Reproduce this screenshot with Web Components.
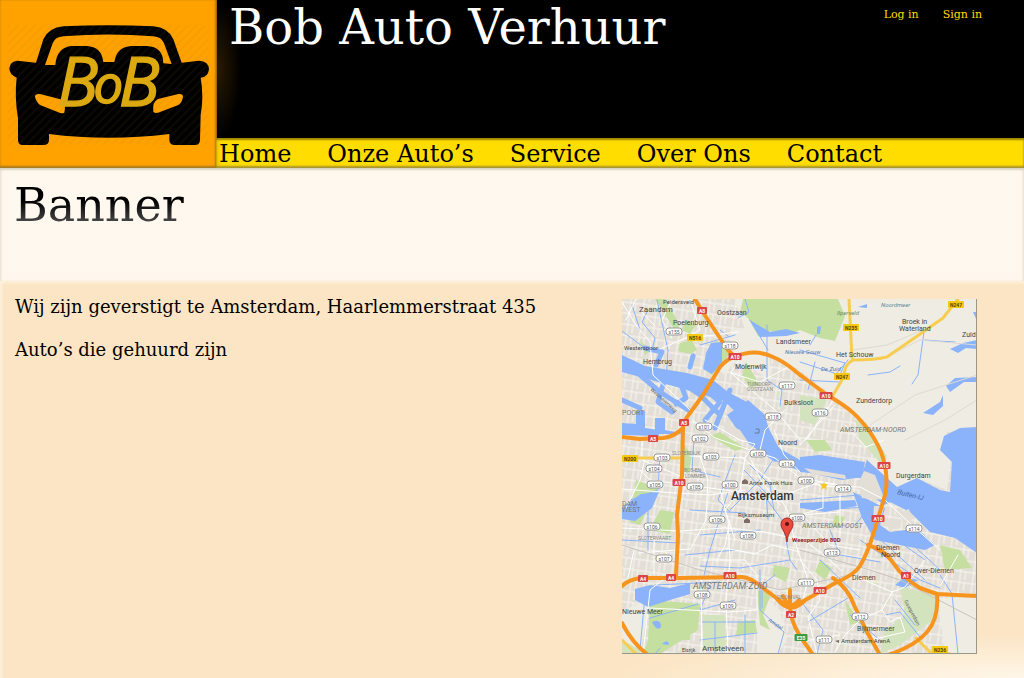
<!DOCTYPE html>
<html lang="nl">
<head>
<meta charset="utf-8">
<title>Bob Auto Verhuur</title>
<style>
  html, body { height: 100%; margin: 0; }
  body { font-family: "DejaVu Serif", serif; color: #000; background: #fbe5c4; }
</style>
</head>
<body>
<bob-page>
  <bob-header slot="header">
    <bob-logo slot="logo"></bob-logo>
    <bob-nav slot="nav"></bob-nav>
  </bob-header>
  <bob-banner slot="banner">Banner</bob-banner>
  <bob-contact>
    <p>Wij zijn geverstigt te Amsterdam, Haarlemmerstraat 435</p>
    <p>Auto’s die gehuurd zijn</p>
    <bob-map slot="map"></bob-map>
  </bob-contact>
</bob-page>

<script>
function define(name, html) {
  const t = document.createElement('template');
  t.innerHTML = html;
  customElements.define(name, class extends HTMLElement {
    constructor() {
      super();
      this.attachShadow({ mode: 'open' }).append(t.content.cloneNode(true));
    }
  });
}

define('bob-page', `
<style>
  :host { display: flex; flex-direction: column; min-height: 100%; }
  main { flex: 1; display: flex; flex-direction: column; }
</style>
<slot name="header"></slot>
<main><slot name="banner"></slot><slot></slot></main>`);

define('bob-header', `
<style>
  :host { display: grid; grid-template-columns: 216px 1fr; grid-template-rows: 138px 30px; background: #000; }
  ::slotted([slot=logo]) { grid-row: 1 / 3; }
  .top { display: flex; justify-content: space-between; align-items: flex-start; padding: 0 42px 0 12px;
    background: radial-gradient(ellipse 24px 70px at 0 50%, #2c1b00, #000); border-left: 1px solid #a86a00; }
  h1 { margin: 0; font-size: 48px; line-height: 54px; font-weight: 400; color: #fff; white-space: nowrap; }
  .account { display: flex; gap: 24px; padding-top: 7px; font-size: 11px; line-height: 16px; }
  a { color: #fd0; text-decoration: none; white-space: nowrap; }
</style>
<slot name="logo"></slot>
<div class="top">
  <h1>Bob Auto Verhuur</h1>
  <div class="account"><a href="#login">Log in</a><a href="#signin">Sign in</a></div>
</div>
<slot name="nav"></slot>`);

define('bob-nav', `
<style>
  :host { display: block; background: #fd0; box-shadow: inset 0 2px 2px #9a8500, inset 0 -2px 2px #a89430, inset 3px 0 3px #f5c500; }
  nav { display: flex; gap: 36px; padding-left: 3px; font-size: 24px; line-height: 32px; }
  a { color: #000; text-decoration: none; white-space: nowrap; }
</style>
<nav><a href="#home">Home</a><a href="#autos">Onze Auto’s</a><a href="#service">Service</a><a href="#over">Over Ons</a><a href="#contact">Contact</a></nav>`);

define('bob-logo', `
<style>
  :host { display: block; background: #ffa200; box-shadow: inset 0 -2px 2px #a87c20, inset -1px 0 2px #c88000; }
  svg { display: block; width: 216px; height: 166px; }
  text { font: italic 204px "Open Sans", sans-serif; fill: #dcaa10; stroke: #dcaa10; stroke-width: 4; }
  .small { font-size: 160px; }
</style>
<svg viewBox="0 0 648 498" role="img" aria-label="BoB">
  <defs><pattern id="stripe" width="18" height="18" patternUnits="userSpaceOnUse" patternTransform="rotate(45)"><rect width="5" height="18" fill="#a06a20" opacity=".1"/></pattern></defs>
  <path fill-rule="evenodd" d="M108 188L130 118Q146 83 190 79Q325 72 460 79Q505 83 520 118L545 188L597 182Q627 184 627 208Q624 232 602 233Q612 290 602 345L600 420Q600 435 585 435H525Q508 435 508 420V402Q325 425 147 402V420Q147 435 130 435H68Q54 435 54 420V355Q43 290 50 233Q28 224 28 205Q30 184 52 182ZM135 195L158 130Q165 111 190 109Q325 98 460 109Q485 111 492 130L515 192L490 190Q490 140 440 138H395Q350 140 343 186H310Q305 140 260 138H215Q170 142 166 195Z
  M105 290Q105 280 120 282L190 300Q198 312 193 338Q185 342 175 337L120 315Q108 305 105 290ZM549 290Q549 280 535 282L474 297Q456 306 460 335Q466 342 480 336L535 315Q547 306 549 290Z"/>
  <rect x="24" y="75" width="600" height="360" fill="url(#stripe)"/>
  <text y="318"><tspan x="172">B</tspan><tspan x="280" y="308" class="small">o</tspan><tspan x="356" y="318">B</tspan></text>
</svg>`);

define('bob-banner', `
<style>
  :host { display: block; min-height: 113px; background: #fff8ee; box-shadow: inset 0 2px 2px #d8d2c0, inset 2px 0 2px #f4ecde, inset -2px 0 2px #f4ecde; }
  h2 { display: inline-block; margin: 0; padding: 9px 0 0 14px; font-size: 46px; line-height: 56px; font-weight: 400;
    color: transparent; background: linear-gradient(#000 50%, #555 90%); -webkit-background-clip: text; background-clip: text; }
</style>
<h2><slot></slot></h2>`);

define('bob-contact', `
<style>
  :host { flex: 1; display: flex; justify-content: space-between; align-items: flex-start; padding: 14px 47px 24px 15px; font-size: 18px; line-height: 23px;
    background: radial-gradient(ellipse 420px 44px at 100% 100%, #fff6e8, transparent), linear-gradient(#fff0dc, transparent 4px), linear-gradient(90deg, #fff0dc, transparent 4px), #fbe5c4; }
  ::slotted(p) { margin: 0 0 20px; }
  ::slotted(bob-map) { margin-top: 4px; }
</style>
<div><slot></slot></div>
<slot name="map"></slot>`);

const stroke = (color, width, list) => `<g fill="none" stroke="${color}" stroke-width="${width}" stroke-linejoin="round" stroke-linecap="round">${list.map(d => `<path d="${d}"/>`).join('')}</g>`;
const fill = (color, list) => `<g fill="${color}">${list.map(d => `<path d="${d}"/>`).join('')}</g>`;
const label = ([x, y, text, size = 7, color = '#444', extra = '']) => `<text x="${x}" y="${y}" font-size="${size}" fill="${color}" ${extra}>${text}</text>`;
const shield = (bg, fg, edge) => ([x, y, text]) => {
  const w = text.length * 3 + 4;
  return `<rect x="${x - w / 2}" y="${y - 4}" width="${w}" height="7" rx="${edge ? 3 : 1}" fill="${bg}" stroke="${edge || 'none'}"/><text x="${x}" y="${y + 2}" font-size="5" font-weight="${edge ? 400 : 700}" fill="${fg}" text-anchor="middle">${text}</text>`;
};

const highways = [
  'M695 299L702 311L728 350L735 357',
  'M676 577L678 535L677 515L682 475L683 428Q684 420 690 413L703 395L720 367Q728 358 735 357C748 351 760 351 773 357C788 363 794 371 803 377L827 395C850 408 858 416 870 432Q880 447 883 458Q890 482 883 502L873 535Q868 552 860 566Q854 575 837 582L800 603Q790 607 783 603L763 588Q750 577 742 577L680 578L640 578Q628 580 622 586',
  'M622 437L640 439L663 438Q674 437 683 428', 'M790 590V605Q790 620 800 636L813 655',
  'M868 545Q885 550 894 564T920 588L937 594L977 596', 'M937 594Q939 618 927 632T888 655',
  'M833 578Q848 588 854 605L867 632L880 655', 'M622 623Q632 643 648 655', 'M783 596Q790 612 799 600M777 599Q790 615 804 601'
];
const streets = [
  'M622 302L636 325L650 342L653 375L690 410', 'M636 299L626 320', 'M640 310L655 326', 'M690 299L700 330L680 341', 'M660 349L683 339L738 332',
  'M672 299L662 320L672 338', 'M740 358L731 373L775 410L800 440', 'M731 373L760 382L790 366', 'M692 420L715 438L750 450L775 458L800 478L846 486',
  'M705 420L740 440L755 444L745 458L690 456', 'M642 440V460L680 476', 'M640 470L650 480L740 492L775 500', 'M645 458L640 480L625 510',
  'M622 489L676 493L710 495L745 490', 'M622 528L680 531L725 528L765 532L800 540', 'M700 456L708 480L706 520L690 550', 'M720 490L728 520L730 560L726 600L728 654',
  'M745 458L740 490L725 510L735 540', 'M740 456L770 480L787 510L796 545L808 580L802 603', 'M750 458L762 482L780 505', 'M725 548L755 554L772 545L800 552',
  'M702 560L745 560L757 575L757 610L728 612L650 608', 'M701 577L702 654', 'M654 540V575', 'M634 550L628 578', 'M638 553L690 549',
  'M770 500L820 482L835 485', 'M800 480L823 486L860 487L885 500L915 528L940 550', 'M823 488V508L800 515L840 512', 'M840 495V535', 'M802 515L830 545L860 550',
  'M804 540L825 556L842 571', 'M800 560L817 580L820 600L808 617L817 654', 'M800 445L835 405', 'M845 425L866 447L884 440', 'M833 400L820 420L806 440',
  'M850 574L892 592L882 610L890 622L900 617L905 632L870 640', 'M892 592L905 587L925 560', 'M940 586L958 555', 'M882 610L860 620L845 635L835 652', 'M800 642L840 635',
  'M760 450L765 430L785 410', 'M774 430L784 455L800 472', 'M716 562L725 545L730 520', 'M643 655L650 590L670 574'
];
const canals = [
  'M648 310L642 322L655 338L652 350', 'M657 300L668 350L666 380', 'M632 305L640 330', 'M622 331L650 352', 'M700 345L735 335', 'M720 330L728 336',
  'M745 299L749 312L738 318', 'M767 325V380L782 390L780 406', 'M750 320L768 350', 'M800 350L845 363L840 375L800 362M800 380L840 382M815 362L808 390',
  'M924 332L918 375L912 384', 'M868 375L890 372L900 366', 'M835 375L848 360', 'M816 335L810 345', 'M925 340L938 341L955 342',
  'M770 437L776 455L760 480L730 510', 'M728 492L710 550L704 575', 'M735 455L718 500L730 512', 'M750 465L770 485L774 510', 'M744 470L766 493L768 519', 'M760 490L782 520L790 560L797 570', 'M694 440L692 470L720 477M660 455L658 490L630 500M648 510V550M622 540L680 543M690 510L745 513M700 535L760 530M685 555L735 550',
  'M700 566L740 568L790 560M710 585L700 610L735 600M650 618L698 604M645 595L640 650M655 585L720 582M760 570V610L774 623L784 632L778 654',
  'M775 575L762 585V608M660 648L655 654M702 622L755 622M700 640L757 633M745 615V654M715 622V654',
  'M800 500L860 495M815 510L870 507L855 525M830 530L840 555L880 562M860 540L920 580L940 588M870 530L925 580M940 575L952 594L958 654M902 535L940 570M890 535L925 560',
  'M848 598L808 622M850 615L880 640M895 600L915 625M885 615L900 612L920 637M800 600L823 630L817 654M820 560L860 598'
];
const svg = `
<defs><pattern id="blocks" width="13" height="11" patternUnits="userSpaceOnUse" patternTransform="rotate(8)"><path d="M0 3H13M4 0V11M9 3V11" fill="none" stroke="#f8f6f1" stroke-width="1"/></pattern></defs>
<rect x="622" y="299" width="355" height="355" fill="#e4dfd6"/>
<rect x="622" y="299" width="355" height="355" fill="url(#blocks)"/>
${fill('#efece4', ['M735 299H977V430L947 432L943 448L950 458L947 490L917 478L897 487L867 460L884 455L868 425L835 397L800 370L750 345Z', 'M730 330L770 325V380L735 357Z', 'M763 595L780 610L786 640L778 654H757V610Z', 'M937 598H977V654H945Z', 'M622 610L650 600L640 654H622Z', 'M700 358L735 360L725 375Z'])}
${fill('#c5dfa0', ['M743 299H838L845 316L835 341L820 338L800 330L786 336L770 331L758 336L748 318L740 312Z', 'M680 343L692 340L697 350L690 354L678 351Z', 'M655 299H665L680 325L675 330Z', 'M650 600L700 604L698 630L660 654H643L648 640Z', 'M680 440L692 455L688 475L682 468Z', 'M746 362L760 385L750 388L742 375Z', 'M660 510L674 512L670 534L650 530Z', 'M710 436L720 432L745 448L735 451Z', 'M636 480L658 488L640 525L630 522Z', 'M757 590L772 592L763 615L770 630L760 625Z', 'M806 440L825 440L832 450L815 452Z', 'M820 560L832 568L825 580L815 572Z', 'M686 320L696 325L690 334L682 330Z', 'M640 340L650 351L645 355Z', 'M774 565L790 568L786 582L772 575Z', 'M845 600L860 622L850 625Z', 'M716 340L730 354L712 375L703 367Z', 'M940 545L960 550L972 568L945 570Z', 'M835 515L845 517L840 528L832 526Z', 'M738 622L755 620L757 632L736 636Z', 'M675 615H690V640H675Z'])}
${fill('#d3e3bd', ['M800 395L827 400L815 425L800 420Z', 'M900 586L937 596L935 618L900 645L880 654L885 630L905 615Z', 'M855 420L865 422L887 456L883 466L860 440Z', 'M622 640L640 650V654H622Z', 'M703 615H725V650H703Z'])}
${fill('#8ab3fb', [
  'M622 355L645 366L687 373L713 380L728 392L745 401L757 415L767 425L779 448L800 460L857 463L863 477L842 480L800 471L775 461L752 440L742 418L724 401L680 388L622 372Z',
  'M727 415L748 400L765 415L770 434L783 455L775 462L745 441Z',
  'M867 460L897 487L917 478L940 490L950 492L952 462L940 450L944 436L960 428L977 427V553L955 538L930 532L910 512L890 502L884 505L858 485Z',
  'M820 455L865 462L862 478L800 472V457Z', 'M711 343L722 342V362L712 374L703 369L706 353Z',
  'M635 589L650 585L670 588L690 583V594L670 600L648 607L635 600Z', 'M622 507L641 494L659 492L652 508L635 521L622 519Z',
  'M622 423L636 424V411H645V428L659 430V436L622 435Z', 'M655 418H665V430L687 434H655Z',
  'M750 320L760 337L786 336L800 333L786 329L770 332L758 325Z',
  'M950 349L963 343L977 340V349L966 348L958 353Z', 'M946 386L955 378L977 377V382L964 382L950 392Z', 'M923 413L940 402L943 395V406L933 415Z',
  'M858 307L867 304V308Z', 'M817 327L821 326L820 334L817 334Z', 'M973 312L977 312V321Z', 'M652 622Q661 618 661 627Q657 632 652 622ZM662 644Q668 638 669 645Z',
  'M895 585L905 577L918 580L905 588Z', 'M853 492L885 508L880 525L890 532L905 530L912 524L935 545L925 550L875 540L862 518Z', 'M800 503L855 500L857 506L825 512L800 508Z'])}
${stroke('#8ab3fb', 5, ['M640 375L660 392L688 410', 'M656 365L662 352L645 348', 'M665 378L658 402L672 412', 'M685 385L700 395L720 415', 'M706 390L720 402L705 420', 'M730 390L715 428', 'M622 400L640 408', 'M680 382L686 398L676 404', 'M690 367L693 356'])}
${fill('#e4dfd6', ['M864 471L875 475L885 500L862 498L858 484Z', 'M804 468L845 475L846 479L812 474Z', 'M874 506L884 506L882 516L873 520Z', 'M901 512L909 509L912 520L903 524Z', 'M885 520L895 518L901 528L889 530Z', 'M720 420L740 430L748 442L730 436Z'])}
${stroke('#8ab3fb', 1, canals)}
${stroke('#fff', 1, streets)}
${stroke('#dedad2', 1, ['M880 360L920 340L977 345', 'M853 350L887 345L935 325', 'M870 425L915 395L977 375', 'M905 440L945 420L977 400'])}
${stroke('#c8c4bd', 1, ['M800 550L870 570L900 580L977 620', 'M622 545L700 570L780 590L850 575'])}
${stroke('#f7cd50', 3, ['M958 299L943 318L923 332L887 357Q875 360 853 360Q846 364 845 370L842 380L832 397', 'M849 299L852 358', 'M622 458H682', 'M622 640L636 654', 'M916 638L930 652L950 654'])}
${stroke('#f7941e', 4, highways)}
${stroke('#6b7b98', 1, ['M756 429H759V433H755'])}
${[
  [639, 312, 'Zaandam', 8], [663, 304, 'Peldersveld', 6], [717, 315, 'Oostzaan'], [673, 325, 'Poelenburg'], [624, 350, 'Westerspoor', 6], [643, 364, 'Hembrug'], [735, 369, 'Molenwijk'], [776, 344, 'Landsmeer'],
  [836, 357, 'Het Schouw'], [902, 324, 'Broek in'], [899, 331, 'Waterland'], [962, 337, 'Zuid'], [856, 403, 'Zunderdorp'], [784, 405, 'Buiksloot'], [778, 445, 'Noord'], [896, 478, 'Durgerdam'],
  [881, 307, 'Noordmeer', 6, '#5c8a9a', 'font-style="italic"'], [837, 315, 'Ilperveld', 6, '#5c8a6a', 'font-style="italic"'], [785, 354, 'Nieuwe Gouw', 6, '#5577b0', 'font-style="italic"'], [821, 371, 'De Zuid', 6, '#5577b0', 'font-style="italic"'],
  [747, 386, 'TUINDORP', 5, '#888'], [747, 391, 'OOSTZAAN', 5, '#888'], [622, 415, 'POORT', 7, '#777'], [672, 455, 'SLOTERDIJK', 5, '#888'], [684, 472, 'BOS EN', 5, '#888'], [685, 478, 'LOMMER', 5, '#888'], [638, 540, 'SLOTERVAART', 5, '#888'],
  [840, 432, 'AMSTERDAM-NOORD', 7, '#777', 'font-style="italic"'], [802, 528, 'AMSTERDAM-OOST', 7, '#777', 'font-style="italic"'], [693, 589, 'AMSTERDAM-ZUID', 9, '#777', 'font-style="italic"'], [622, 506, 'DAM', 7, '#777'], [622, 512, 'WEST', 7, '#777'],
  [897, 494, 'Buiten-IJ', 7, '#4568a5', 'font-style="italic" transform="rotate(14 897 494)"'], [749, 485, 'Anne Frank Huis', 6], [738, 517, 'Rijksmuseum', 6], [731, 500, 'Amsterdam', 12, '#333', 'font-weight="500"'],
  [792, 542, 'Weesperzijde 80D', 6, '#9b1b1b', 'font-weight="700"'], [876, 550, 'Diemen'], [881, 557, 'Noord'], [914, 573, 'Over-Diemen', 7], [852, 580, 'Diemen'], [857, 631, 'Bijlmermeer'], [841, 643, 'Amsterdam ArenA', 6],
  [622, 614, 'Nieuwe Meer', 7], [702, 651, 'Amstelveen', 8], [682, 652, 'Elsrijk', 5], [777, 599, 'DE OMVAL', 5, '#888'], [768, 621, 'Amstel', 5, '#4568a5', 'transform="rotate(35 768 621)"'],
  [650, 390, 'Westhavenweg', 5, '#666', 'transform="rotate(42 650 390)"'], [904, 601, 'Gaasperdam', 5, '#666', 'transform="rotate(62 904 601)"']
].map(label).join('')}
${[[674, 332, 's155'], [730, 346, 's118'], [787, 386, 's117'], [820, 413, 's116'], [773, 417, 's118'], [704, 427, 's101'], [700, 439, 's102'], [662, 458, 's103'], [711, 457, 's103'], [758, 454, 's100'], [787, 464, 's116'], [654, 469, 's104'], [655, 485, 's105'], [695, 487, 's105'], [730, 485, 's100'], [806, 481, 's100'], [843, 489, 's114'], [652, 527, 's106'], [717, 520, 's106'], [748, 536, 's108'], [797, 518, 's100'], [664, 559, 's107'], [702, 595, 's108'], [728, 606, 's109'], [914, 529, 's114'], [832, 553, 's113'], [806, 583, 's111'], [860, 617, 's112'], [824, 640, 's111']].map(shield('#fff', '#555', '#999')).join('')}
${[[702, 311, 'A8'], [735, 357, 'A10'], [684, 423, 'A5'], [653, 439, 'A5'], [679, 483, 'A10'], [826, 396, 'A10'], [884, 466, 'A10'], [878, 519, 'A10'], [643, 579, 'A4'], [671, 578, 'A4'], [730, 576, 'A10'], [820, 591, 'A10'], [906, 576, 'A1'], [791, 615, 'A2']].map(shield('#dc4545', '#fff')).join('')}
${[[695, 338, 'N516'], [851, 328, 'N235'], [956, 305, 'N247'], [842, 377, 'N247'], [630, 459, 'N200'], [940, 650, 'N236']].map(shield('#f4c913', '#554400')).join('')}
${shield('#3d9a41', '#fff')([801, 638, 'E35'])}
<path d="M824 482l1 2 3 .4-2 2 .6 3-2.6-1.4-2.6 1.4.6-3-2-2 3-.4z" fill="#f9c623"/>
<path d="M742 484v-3l3-2 3 2v3zM744 523v-3l3-2 3 2v3zM835 641l4 2v-3z" fill="#806b66"/>
<path d="M787 542C786 531 781 530 781 524A6 6 0 0 1 793 524C793 530 788 531 787 542Z" fill="#ea4a3d" stroke="#a62b22"/><circle cx="787" cy="524" r="2" fill="#5d1212"/>
<path d="M977 299V654H622" fill="none" stroke="#99978a" stroke-width="2"/>`;
define('bob-map', `
<style>
  :host { display: block; flex: none; width: 355px; }
  svg { display: block; width: 100%; font-family: Roboto, sans-serif; }
</style>
<svg viewBox="622 299 355 355" role="img" aria-label="Kaart van Amsterdam">${svg}</svg>`);
</script>
</body>
</html>
